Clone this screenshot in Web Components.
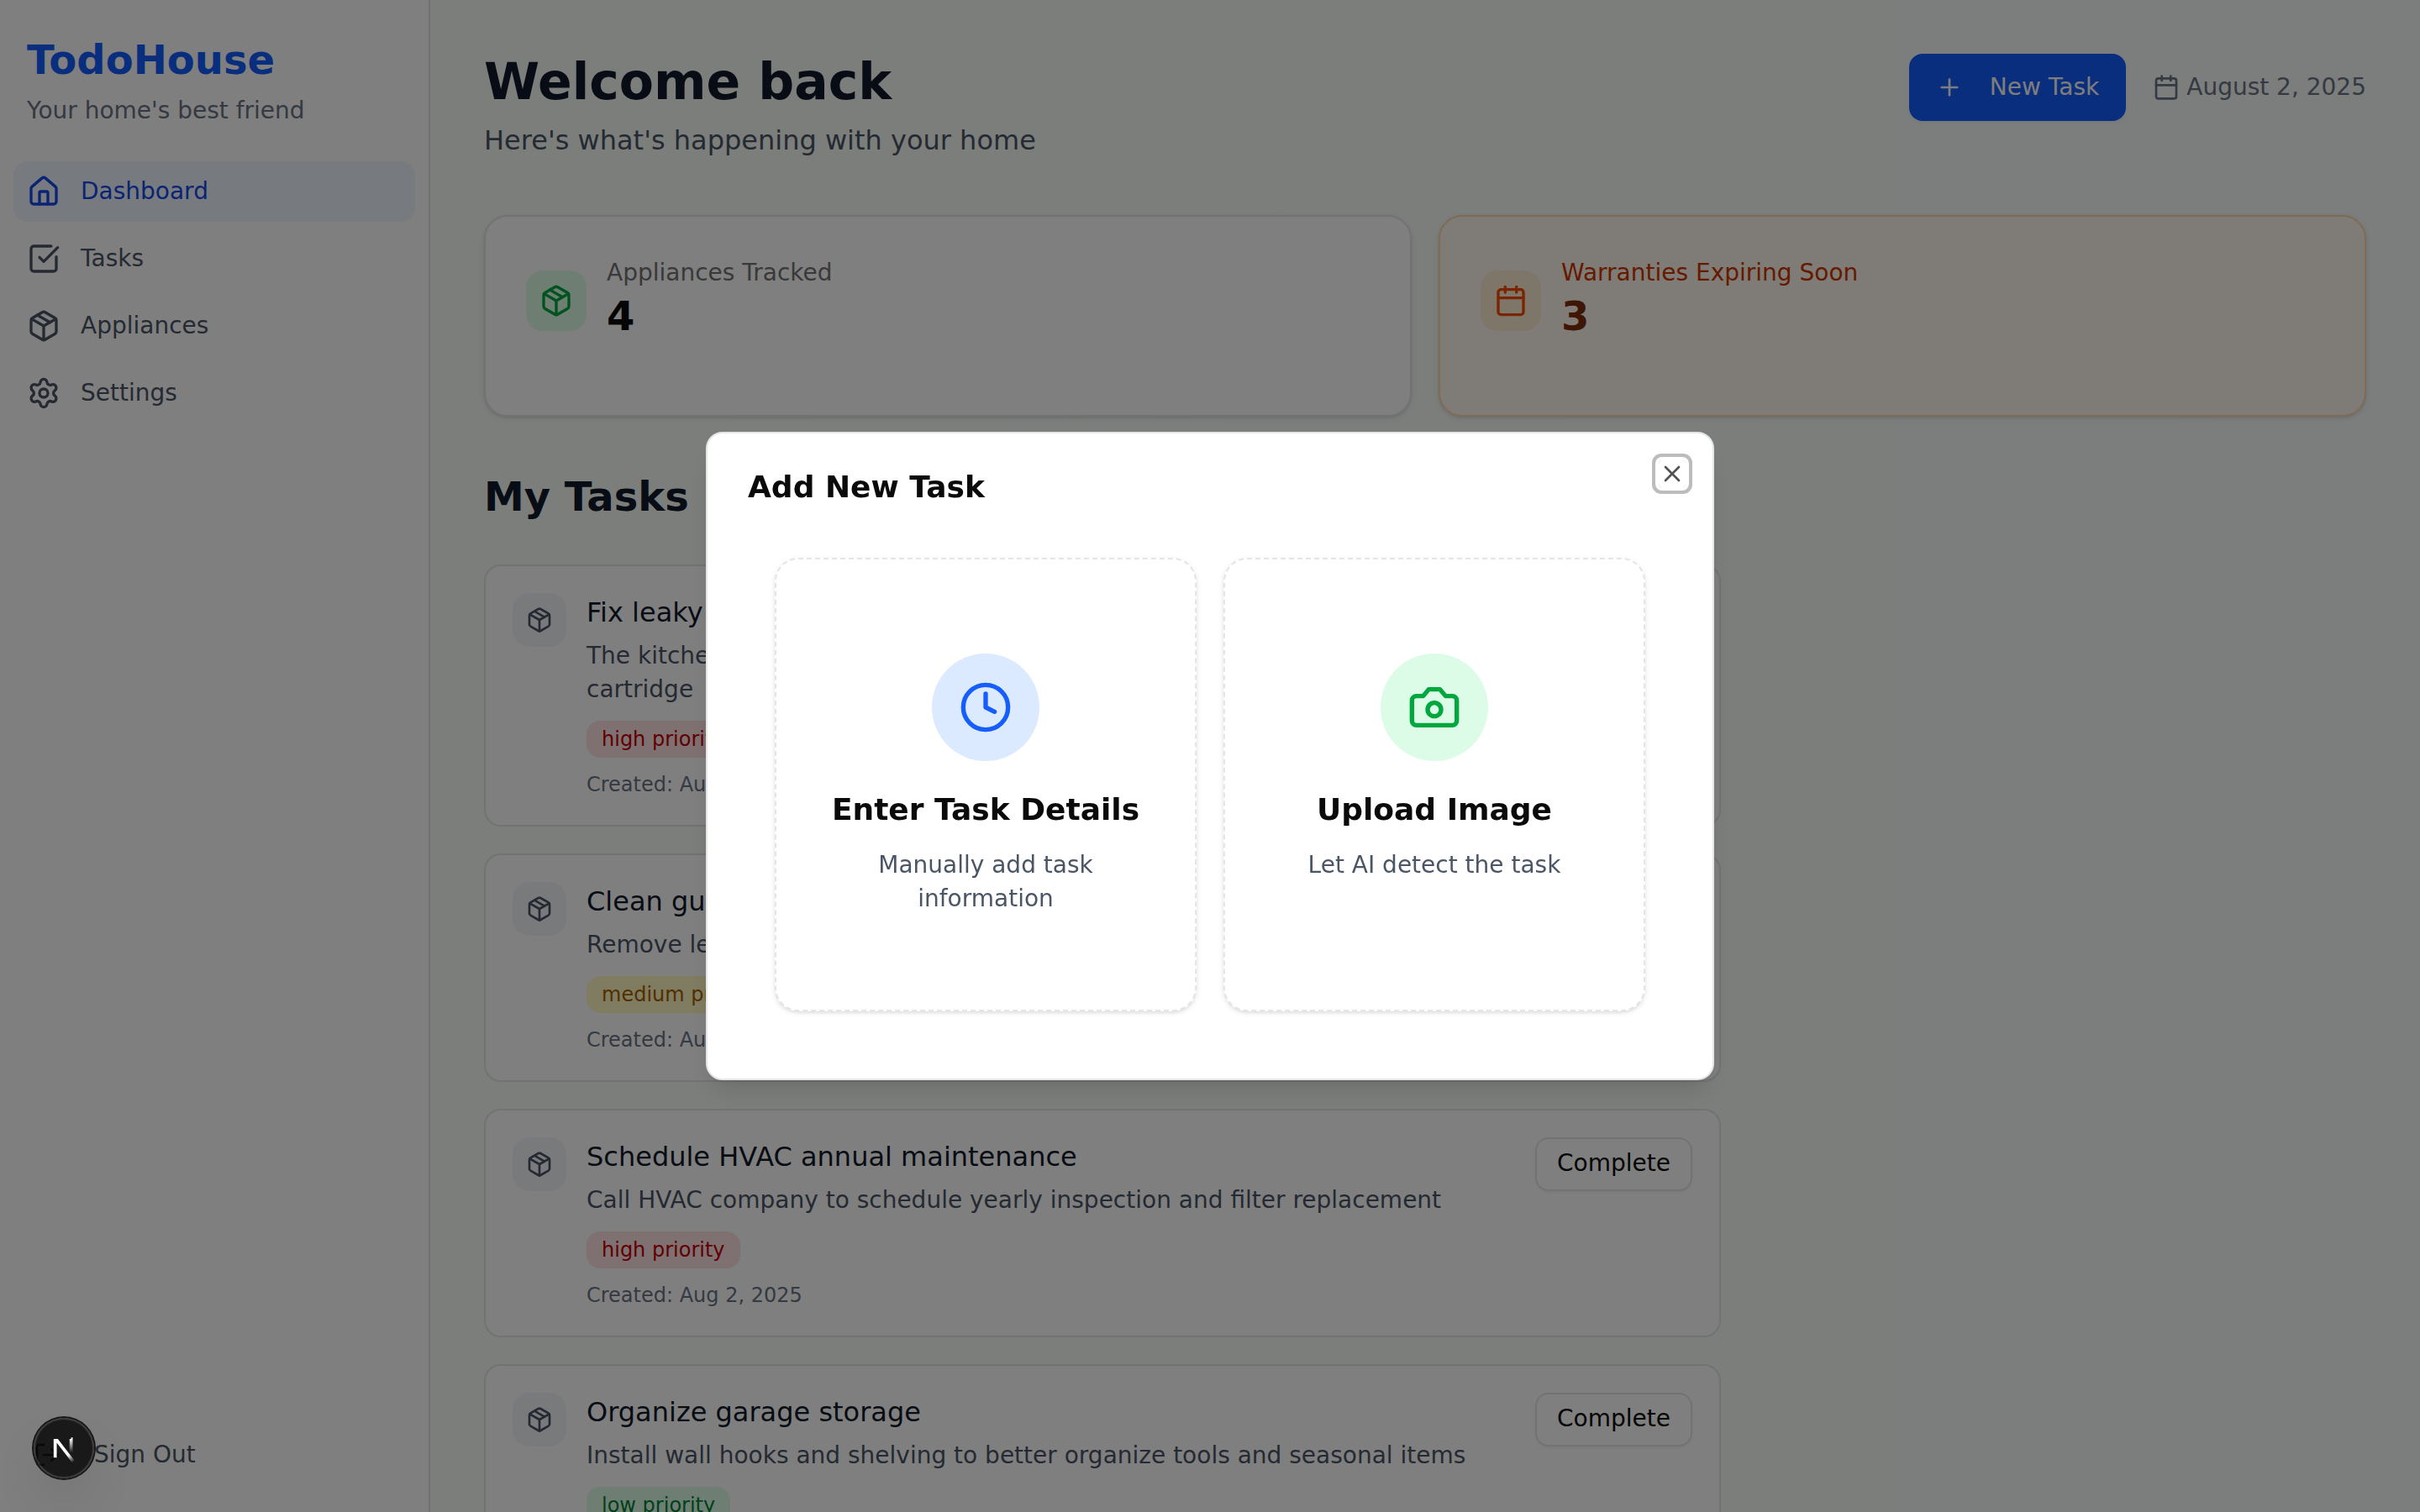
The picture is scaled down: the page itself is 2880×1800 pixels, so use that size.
<!DOCTYPE html>
<html lang="en">
<head>
<meta charset="utf-8">
<title>TodoHouse</title>
<style>
  html, body { margin: 0; height: 100%; overflow: hidden; }
  body {
    --gray-900: #101828; --gray-600: #4a5565; --gray-500: #6a7282;
    --ink: #0a0a0a; --line: #e5e5e5;
    font: 400 28px/40px "DejaVu Sans", sans-serif;
    color: var(--ink);
    background: linear-gradient(to right, #f8fdf8, #f8fcfa);
  }
</style>
</head>
<body>
<todo-app>
  <side-bar slot="side">
    <nav-item icon="house" active>Dashboard</nav-item>
    <nav-item icon="check">Tasks</nav-item>
    <nav-item icon="package">Appliances</nav-item>
    <nav-item icon="settings">Settings</nav-item>
  </side-bar>
  <page-header>
    <span slot="title">Welcome back</span>
    <span slot="subtitle">Here's what's happening with your home</span>
    <span slot="date">August 2, 2025</span>
  </page-header>
  <stat-row>
    <stat-card icon="package" label="Appliances Tracked" value="4"></stat-card>
    <stat-card tone="warn" icon="calendar" label="Warranties Expiring Soon" value="3"></stat-card>
  </stat-row>
  <task-list heading="My Tasks">
    <task-card priority="high" name="Fix leaky kitchen faucet">The kitchen faucet has been dripping constantly. Need to replace washer or cartridge</task-card>
    <task-card priority="medium" name="Clean gutters">Remove leaves and debris</task-card>
    <task-card priority="high" name="Schedule HVAC annual maintenance">Call HVAC company to schedule yearly inspection and filter replacement</task-card>
    <task-card priority="low" name="Organize garage storage">Install wall hooks and shelving to better organize tools and seasonal items</task-card>
  </task-list>
</todo-app>
<modal-dialog heading="Add New Task">
  <choice-card icon="clock" tone="blue" name="Enter Task Details">Manually add task information</choice-card>
  <choice-card icon="camera" tone="green" name="Upload Image">Let AI detect the task</choice-card>
</modal-dialog>
<dev-badge></dev-badge>

<script>
const ICONS = {
  house: '<path d="M15 21v-8a1 1 0 0 0-1-1h-4a1 1 0 0 0-1 1v8"/><path d="M3 10a2 2 0 0 1 .709-1.528l7-5.999a2 2 0 0 1 2.582 0l7 5.999A2 2 0 0 1 21 10v9a2 2 0 0 1-2 2H5a2 2 0 0 1-2-2z"/>',
  check: '<path d="M21 10.656V19a2 2 0 0 1-2 2H5a2 2 0 0 1-2-2V5a2 2 0 0 1 2-2h12.344"/><path d="m9 11 3 3L22 4"/>',
  package: '<path d="M11 21.73a2 2 0 0 0 2 0l7-4A2 2 0 0 0 21 16V8a2 2 0 0 0-1-1.73l-7-4a2 2 0 0 0-2 0l-7 4A2 2 0 0 0 3 8v8a2 2 0 0 0 1 1.73z"/><path d="M12 22V12"/><polyline points="3.29 7 12 12 20.71 7"/><path d="m7.5 4.27 9 5.15"/>',
  settings: '<path d="M9.671 4.136a2.34 2.34 0 0 1 4.659 0 2.34 2.34 0 0 0 3.319 1.915 2.34 2.34 0 0 1 2.33 4.033 2.34 2.34 0 0 0 0 3.831 2.34 2.34 0 0 1-2.33 4.033 2.34 2.34 0 0 0-3.319 1.915 2.34 2.34 0 0 1-4.659 0 2.34 2.34 0 0 0-3.32-1.915 2.34 2.34 0 0 1-2.33-4.033 2.34 2.34 0 0 0 0-3.831A2.34 2.34 0 0 1 6.35 6.051a2.34 2.34 0 0 0 3.319-1.915"/><circle cx="12" cy="12" r="3"/>',
  calendar: '<path d="M8 2v4"/><path d="M16 2v4"/><rect width="18" height="18" x="3" y="4" rx="2"/><path d="M3 10h18"/>',
  clock: '<circle cx="12" cy="12" r="10"/><polyline points="12 6 12 12 16 14"/>',
  camera: '<path d="M14.5 4h-5L7 7H4a2 2 0 0 0-2 2v9a2 2 0 0 0 2 2h16a2 2 0 0 0 2-2V9a2 2 0 0 0-2-2h-3l-2.5-3z"/><circle cx="12" cy="13" r="3"/>',
  plus: '<path d="M5 12h14"/><path d="M12 5v14"/>',
  close: '<path d="M18 6 6 18"/><path d="m6 6 12 12"/>',
  logout: '<path d="m16 17 5-5-5-5"/><path d="M21 12H9"/><path d="M9 21H5a2 2 0 0 1-2-2V5a2 2 0 0 1 2-2h4"/>'
};

function define(name, render) {
  customElements.define(name, class extends HTMLElement {
    constructor() {
      super();
      this.attachShadow({ mode: 'open' });
    }
    connectedCallback() {
      const t = document.createElement('template');
      t.innerHTML = '<style>*{box-sizing:border-box}h1,h2,h3,p{margin:0}button{font:inherit;margin:0}</style>' + render(k => this.getAttribute(k));
      this.shadowRoot.replaceChildren(t.content.cloneNode(true));
    }
  });
}

define('app-icon', a => `
  <style>:host{display:block;flex:none;width:var(--size,32px);height:var(--size,32px)} svg{display:block;width:100%;height:100%}</style>
  <svg viewBox="0 0 24 24" fill="none" stroke="currentColor" stroke-width="2" stroke-linecap="round" stroke-linejoin="round" aria-hidden="true">${ICONS[a('name')]}</svg>`);

define('todo-app', () => `
  <style>
    :host{display:grid;grid-template-columns:512px minmax(0,1fr);height:100vh;overflow:hidden}
    main{padding:64px;overflow:hidden}
  </style>
  <slot name="side"></slot><main><slot></slot></main>`);

define('side-bar', () => `
  <style>
    :host{display:flex;flex-direction:column;box-sizing:border-box;height:100vh;background:#fff;border-right:2px solid var(--line)}
    header{padding:40px 32px}
    h1{font-size:48px;line-height:62px;font-weight:700;color:#155dfc}
    p{margin-top:10px;color:var(--gray-500)}
    nav{flex:1;display:flex;flex-direction:column;gap:8px;padding:0 16px}
    footer{padding:0 16px 32px}
    button{display:flex;align-items:center;gap:40px;width:100%;height:72px;padding:0 24px;border:0;background:none;color:var(--gray-600);text-align:left}
  </style>
  <header><h1>TodoHouse</h1><p>Your home's best friend</p></header>
  <nav><slot></slot></nav>
  <footer><button type="button"><app-icon name="logout"></app-icon><span>Sign Out</span></button></footer>`);

define('nav-item', a => `
  <style>
    :host{display:block;color:var(--gray-600)}
    :host([active]){color:#1447e6}
    :host([active]) a{background:#eff6ff}
    a{display:flex;align-items:center;gap:24px;padding:16px;border-radius:16px;color:inherit;text-decoration:none}
    app-icon{--size:40px}
  </style>
  <a href="#"><app-icon name="${a('icon')}"></app-icon><span><slot></slot></span></a>`);

define('page-header', () => `
  <style>
    :host{display:flex;justify-content:space-between;align-items:flex-start;height:128px;margin-bottom:64px}
    h1{font-size:60px;line-height:66px;font-weight:700;color:var(--gray-900)}
    p{font-size:32px;line-height:48px;margin-top:13px;color:var(--gray-600)}
    .side{display:flex;align-items:center;gap:32px}
    button{display:flex;align-items:center;gap:32px;height:80px;padding:0 32px;border:0;border-radius:16px;background:#155dfc;color:#fafafa;box-shadow:0 2px 4px rgba(0,0,0,.05)}
    .date{display:flex;align-items:center;gap:8px;color:var(--gray-500)}
  </style>
  <div><h1><slot name="title"></slot></h1><p><slot name="subtitle"></slot></p></div>
  <div class="side">
    <button type="button"><app-icon name="plus"></app-icon><span>New Task</span></button>
    <div class="date"><app-icon name="calendar"></app-icon><slot name="date"></slot></div>
  </div>`);

define('stat-row', () => `
  <style>:host{display:grid;grid-template-columns:1fr 1fr;gap:32px;margin-bottom:64px}</style><slot></slot>`);

define('stat-card', a => `
  <style>
    :host{display:flex;align-items:flex-start;box-sizing:border-box;min-height:240px;padding:48px;border:2px solid var(--line);border-radius:28px;background:#fff;
      box-shadow:0 2px 6px rgba(0,0,0,.1),0 2px 4px -2px rgba(0,0,0,.1);
      --icon-bg:#dcfce7;--icon:#00a63e;--label:#737373;--value:var(--ink)}
    :host([tone=warn]){background:#fff7ed;border-color:#ffd6a8;--icon-bg:#ffedd4;--icon:#f54900;--label:#ca3500;--value:#7e2a0c}
    .row{display:flex;align-items:center;gap:24px}
    .chip{padding:16px;border-radius:20px;background:var(--icon-bg);color:var(--icon)}
    app-icon{--size:40px}
    .label{line-height:38px;color:var(--label)}
    .value{padding-bottom:2px;font-size:48px;line-height:64px;font-weight:700;color:var(--value)}
  </style>
  <div class="row"><div class="chip"><app-icon name="${a('icon')}"></app-icon></div>
  <div><p class="label">${a('label')}</p><p class="value">${a('value')}</p></div></div>`);

define('task-list', a => `
  <style>
    :host{display:grid;grid-template-columns:repeat(3,minmax(0,1fr));gap:64px}
    section{grid-column:span 2}
    h2{font-size:48px;line-height:62px;font-weight:700;color:var(--gray-900);margin-bottom:50px}
    .list{display:flex;flex-direction:column;gap:32px}
  </style>
  <section><h2>${a('heading')}</h2><div class="list"><slot></slot></div></section>`);

define('task-card', a => `
  <style>
    :host{display:flex;align-items:flex-start;gap:24px;padding:32px;border:2px solid var(--line);border-radius:20px;background:#fff;
      --badge-bg:#ffe2e2;--badge:#c10007}
    :host([priority=medium]){--badge-bg:#fef9c2;--badge:#a65f00}
    :host([priority=low]){--badge-bg:#dcfce7;--badge:#008236}
    .chip{padding:16px;border-radius:20px;background:#f3f4f6;color:var(--gray-600)}
    .body{flex:1;min-width:0}
    h3{font-size:32px;line-height:46px;font-weight:400;color:var(--gray-900)}
    .text{margin:9px 0 17px;color:var(--gray-600)}
    .badge{display:block;width:fit-content;padding:6px 18px;border-radius:16px;font-size:24px;line-height:32px;background:var(--badge-bg);color:var(--badge)}
    .date{margin-top:16px;font-size:24px;line-height:32px;color:var(--gray-500)}
    button{height:64px;padding:0 24px 2px;border:2px solid var(--line);border-radius:16px;background:#fff;color:var(--ink);box-shadow:0 2px 4px rgba(0,0,0,.05)}
  </style>
  <div class="chip"><app-icon name="package"></app-icon></div>
  <div class="body">
    <h3>${a('name')}</h3>
    <p class="text"><slot></slot></p>
    <span class="badge">${a('priority')} priority</span>
    <p class="date">Created: Aug 2, 2025</p>
  </div>
  <button type="button">Complete</button>`);

define('modal-dialog', a => `
  <style>
    :host{position:fixed;inset:0;display:flex;align-items:center;justify-content:center;background:rgba(0,0,0,.5)}
    .panel{position:relative;width:1200px;max-width:calc(100% - 64px);padding:48px;border:2px solid var(--line);border-radius:20px;background:#fff;
      box-shadow:0 20px 30px -6px rgba(0,0,0,.1),0 8px 12px -8px rgba(0,0,0,.1)}
    h2{font-size:36px;line-height:32px;font-weight:700}
    .grid{display:grid;grid-template-columns:1fr 1fr;gap:32px;margin-top:36px;padding:32px}
    button{position:absolute;top:32px;right:32px;padding:0;border:0;border-radius:4px;background:none;color:var(--ink);opacity:.7;
      outline:none;box-shadow:0 0 0 4px #fff,0 0 0 8px #a1a1a1}
  </style>
  <div class="panel" role="dialog" aria-modal="true" aria-labelledby="t">
    <h2 id="t">${a('heading')}</h2>
    <div class="grid"><slot></slot></div>
    <button type="button" aria-label="Close"><app-icon name="close"></app-icon></button>
  </div>`);

define('choice-card', a => `
  <style>
    :host{display:block;--disc:#dbeafe;--icon:#155dfc}
    :host([tone=green]){--disc:#dcfce7;--icon:#00a63e}
    button{display:flex;flex-direction:column;align-items:center;justify-content:flex-start;width:100%;height:100%;padding:112px 48px;border:2px dashed var(--line);border-radius:28px;background:#fff;color:var(--ink);text-align:center;
      box-shadow:0 2px 6px rgba(0,0,0,.1),0 2px 4px -2px rgba(0,0,0,.1)}
    .disc{padding:32px;border-radius:50%;background:var(--disc);color:var(--icon)}
    app-icon{--size:64px}
    strong{margin:32px 0 20px;font-size:36px;line-height:52px;font-weight:700}
    .text{color:var(--gray-600)}
  </style>
  <button type="button"><span class="disc"><app-icon name="${a('icon')}"></app-icon></span>
  <strong>${a('name')}</strong><span class="text"><slot></slot></span></button>`);

define('dev-badge', () => `
  <style>
    :host{position:fixed;left:40px;bottom:40px;display:block}
    button{display:block;width:72px;height:72px;padding:0;border:0;border-radius:50%;background:rgba(0,0,0,.8);
      box-shadow:0 0 0 2px #171717,inset 0 0 0 2px rgba(255,255,255,.14),0 32px 64px -16px rgba(0,0,0,.24)}
    svg{display:block;width:100%;height:100%}
  </style>
  <button type="button" aria-label="Open developer tools">
    <svg viewBox="0 0 36 36" fill="none" stroke-width="1.86">
      <defs>
        <linearGradient id="g0" x1="9.96" y1="11.12" x2="15.48" y2="17.97" gradientUnits="userSpaceOnUse"><stop stop-color="#fff"/><stop offset=".604" stop-color="#fff" stop-opacity="0"/></linearGradient>
        <linearGradient id="g1" x1="11.82" y1="1.4" x2="11.79" y2="9.63" gradientUnits="userSpaceOnUse"><stop stop-color="#fff"/><stop offset="1" stop-color="#fff" stop-opacity="0"/></linearGradient>
        <mask id="m" maskUnits="userSpaceOnUse" x="0" y="0" width="20" height="20"><rect width="20" height="20" fill="#fff"/><rect width="5" height="1.5" fill="#000"/></mask>
      </defs>
      <g transform="translate(10.5 11)">
        <path d="M13.3 15.2 2.34 1V12.6" stroke="url(#g0)" mask="url(#m)"/>
        <path d="M11.825 1.5h.001V13.1" stroke="url(#g1)"/>
      </g>
    </svg>
  </button>`);
</script>
</body>
</html>
